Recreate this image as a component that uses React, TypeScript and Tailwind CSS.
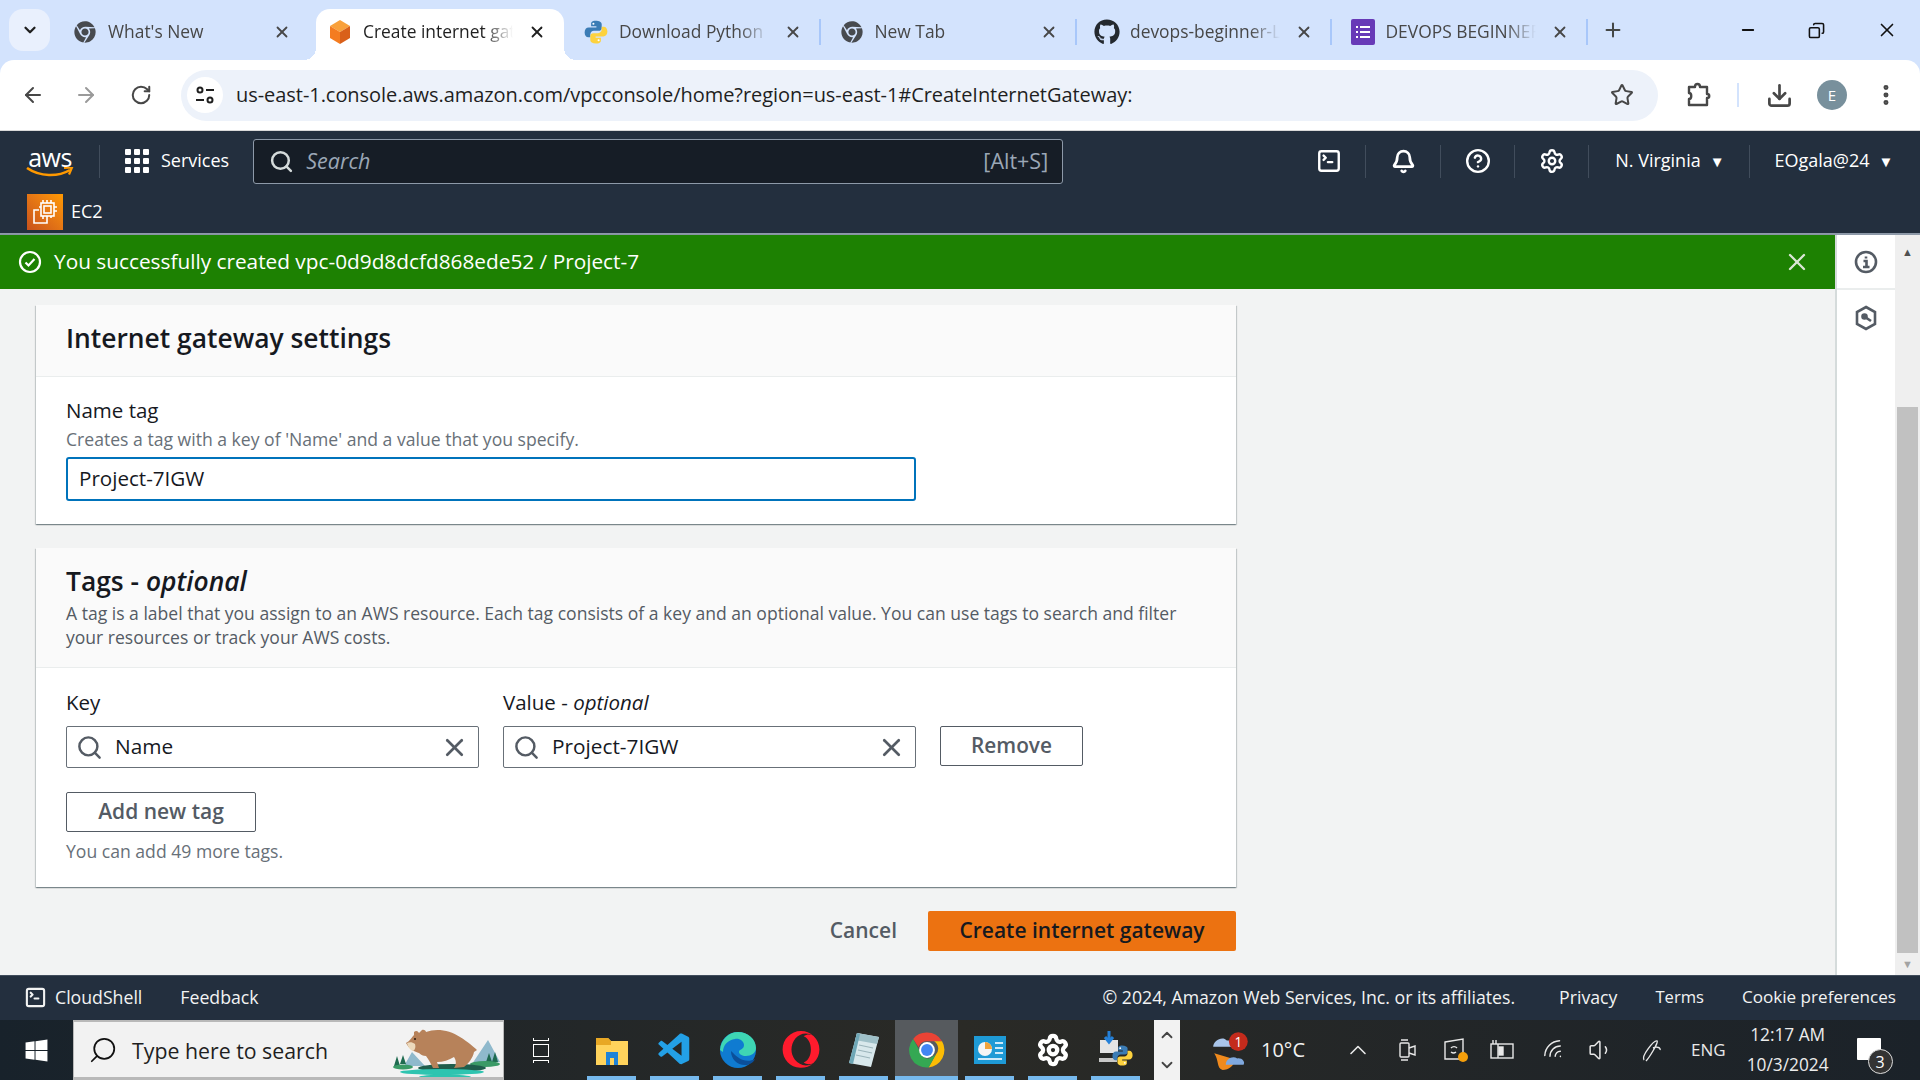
import { ReactNode } from "react";
import {
  ArrowLeft,
  ArrowRight,
  Bell,
  ChevronDown,
  ChevronUp,
  CircleHelp,
  Copy,
  Download,
  EllipsisVertical,
  Minus,
  Plus,
  RotateCw,
  Search,
  Settings,
  Star,
  SquareTerminal,
  Volume1,
  Wifi,
  X,
} from "lucide-react";
import { FaChrome, FaGithub, FaWindows, FaOpera } from "react-icons/fa";
import { VscVscode } from "react-icons/vsc";

function ChromeGlyph({ size = 24 }: { size?: number }) {
  return (
    <svg width={size} height={size} viewBox="0 0 48 48">
      <path d="M24 2a22 22 0 0 1 19 11H24a11 11 0 0 0-10.500 7.500L6.500 10A22 22 0 0 1 24 2z" fill="#ea4335" />
      <path d="M43 13a22 22 0 0 1-17 33l9-16a11 11 0 0 0-2-17z" fill="#fbbc04" />
      <path d="M26 46A22 22 0 0 1 6.500 10L15 26a11 11 0 0 0 11 9l9-5z" fill="#34a853" />
      <circle cx="24" cy="24" r="10" fill="#fff" />
      <circle cx="24" cy="24" r="7.500" fill="#4285f4" />
    </svg>
  );
}

function AwsCube() {
  return (
    <svg width="22" height="26" viewBox="0 0 22 26">
      <path d="M11 1l10 6-10 6L1 7z" fill="#f9a13b" />
      <path d="M1 7l10 6v12L1 19z" fill="#f47c20" />
      <path d="M21 7l-10 6v12l10-6z" fill="#d9601a" />
    </svg>
  );
}

function PythonGlyph({ size = 26 }: { size?: number }) {
  return (
    <svg width={size} height={size} viewBox="0 0 32 32">
      <path d="M16 2c-6 0-6 2.500-6 4v3h6.500v1.500H7c-3 0-5 2.500-5 6s2 6 4.500 6H9v-3.500c0-2.500 2-4.500 4.500-4.500h6c2 0 3.500-1.500 3.500-3.500V6c0-2-2.500-4-8-4z" fill="#3b7cb5" />
      <path d="M16 30c6 0 6-2.500 6-4v-3h-6.500v-1.500H25c3 0 5-2.500 5-6s-2-6-4.500-6H23v3.500c0 2.500-2 4.500-4.500 4.500h-6C10.500 17.500 9 19 9 21v5c0 2 2.500 4 7 4z" fill="#fdd23e" />
      <circle cx="12.800" cy="5.800" r="1.300" fill="#fff" />
      <circle cx="19.200" cy="26.200" r="1.300" fill="#fff" />
    </svg>
  );
}

function FormsGlyph() {
  return (
    <svg width="24" height="26" viewBox="0 0 24 26">
      <rect width="24" height="26" rx="2" fill="#673ab7" />
      <path d="M9 7h10v2H9zM9 12h10v2H9zM9 17h10v2H9zM5 7h2v2H5zM5 12h2v2H5zM5 17h2v2H5z" fill="#fff" />
    </svg>
  );
}

function Tab({
  icon,
  label,
  active = false,
  divider = false,
}: {
  icon: ReactNode;
  label: string;
  active?: boolean;
  divider?: boolean;
}) {
  return (
    <div
      className={`relative flex h-[51px] shrink-0 items-center pb-[6px] ${
        active
          ? "-ml-[2.500px] mr-[10px] w-[248px] rounded-t-[14px] bg-white pl-[11px]"
          : "w-[255.500px] pl-[9px]"
      }`}
    >
      {active ? (
        <>
          <span className="absolute bottom-0 left-[-12px] h-[12px] w-[12px] bg-[radial-gradient(circle_at_0_0,transparent_12px,white_12px)]" />
          <span className="absolute bottom-0 right-[-12px] h-[12px] w-[12px] bg-[radial-gradient(circle_at_100%_0,transparent_12px,white_12px)]" />
        </>
      ) : null}
      <span className="flex w-[26px] shrink-0 justify-center">{icon}</span>
      <span
        className={`ml-[10px] w-[150px] overflow-hidden whitespace-nowrap text-[17.400px] [mask-image:linear-gradient(to_right,black_80%,transparent)] ${
          active ? "text-[#1f1f1f]" : "text-[#474747]"
        }`}
      >
        {label}
      </span>
      <X
        size={18}
        strokeWidth={2.4}
        className={`ml-[15px] shrink-0 ${active ? "text-[#1f1f1f]" : "text-[#474747]"}`}
      />
      {divider ? <span className="ml-[17px] h-[26px] w-[2px] shrink-0 bg-[#a8c7fa]" /> : null}
    </div>
  );
}

function TopBar() {
  return (
    <div className="flex h-[60px] shrink-0 items-end bg-[#d3e3fd] pl-[9px] pr-[22px]">
      <div className="mb-[9px] flex h-[42px] w-[41px] shrink-0 items-center justify-center rounded-[14px] bg-[#e9f0fd]">
        <ChevronDown size={18} strokeWidth={3} className="text-[#1f1f1f]" />
      </div>
      <div className="ml-[13px] flex">
        <Tab icon={<FaChrome size={22} className="text-[#474a4f]" />} label="What's New" />
        <Tab icon={<AwsCube />} label="Create internet gateway" active />
        <Tab icon={<PythonGlyph />} label="Download Python" divider />
        <Tab icon={<FaChrome size={22} className="text-[#474a4f]" />} label="New Tab" divider />
        <Tab icon={<FaGithub size={26} className="text-[#24292f]" />} label="devops-beginner-L" divider />
        <Tab icon={<FormsGlyph />} label="DEVOPS BEGINNERS" divider />
      </div>
      <Plus size={22} strokeWidth={2.2} className="mb-[19px] ml-[6px] shrink-0 text-[#444746]" />
      <div className="mb-[19px] ml-auto flex w-[159px] items-center justify-between text-[#111]">
        <Minus size={18} strokeWidth={2.4} />
        <Copy size={17} strokeWidth={2.2} className="-scale-x-100" />
        <X size={22} strokeWidth={1.8} />
      </div>
    </div>
  );
}

function AddressBar() {
  return (
    <div className="h-[71px] shrink-0 bg-[#d3e3fd]">
      <div className="flex h-[71px] items-center rounded-t-[14px] border-b-[1px] border-[#d9d9d9] bg-white pl-[21px]">
        <ArrowLeft size={24} strokeWidth={2} className="text-[#474747]" />
        <ArrowRight size={24} strokeWidth={2} className="ml-[29px] text-[#9a9a9a]" />
        <RotateCw size={22} strokeWidth={2.2} className="ml-[32px] text-[#474747]" />
        <div className="ml-[29px] flex h-[51px] w-[1477px] shrink-0 items-center rounded-full bg-[#edf2fa] pl-[6px] pr-[24px]">
          <span className="flex h-[36px] w-[36px] items-center justify-center rounded-full bg-white">
            <svg width="22" height="22" viewBox="0 0 22 22" fill="none" stroke="#1f1f1f" strokeWidth="2">
              <circle cx="6" cy="6" r="2.500" />
              <path d="M12 6h8M2 16h8" />
              <circle cx="16" cy="16" r="2.500" />
            </svg>
          </span>
          <span className="ml-[13px] whitespace-nowrap text-[20px] tracking-[-0.05px] text-[#1f1f1f]">
            us-east-1.console.aws.amazon.com/vpcconsole/home?region=us-east-1#CreateInternetGateway:
          </span>
          <Star size={24} strokeWidth={2} className="ml-auto text-[#474747]" />
        </div>
        <svg width="26" height="26" viewBox="0 0 26 26" fill="none" stroke="#474747" strokeWidth="2.400" strokeLinejoin="round" className="ml-[28px]">
          <path d="M3 5h6c0-4 5-4 5 0h7v7c3 0 3 4 0 4v7H3v-6c3 0 3-6 0-6z" />
        </svg>
        <span className="ml-[25px] h-[24px] w-[2px] bg-[#d3e3fd]" />
        <Download size={27} strokeWidth={2.4} className="ml-[27px] text-[#474747]" />
        <span className="ml-[24px] flex h-[30px] w-[30px] items-center justify-center rounded-full bg-[#78909c] text-[15px] text-white">
          E
        </span>
        <EllipsisVertical size={26} strokeWidth={2.6} className="ml-[26px] text-[#474747]" />
      </div>
    </div>
  );
}

function Divider({ className = "" }: { className?: string }) {
  return <span className={`h-[33px] w-[1px] shrink-0 bg-[#414d5c] ${className}`} />;
}

function ConsoleHeader() {
  return (
    <div className="h-[104px] shrink-0 border-b-[2px] border-[#8d99a8] bg-[#232f3e] text-white">
      <div className="flex h-[60px] items-center">
        <div className="ml-[27px] flex w-[46px] flex-col items-center">
          <span className="text-[25px] leading-[22px] tracking-[-0.5px]">aws</span>
          <svg width="48" height="10" viewBox="0 0 48 10" className="-mt-[1px]">
            <path d="M1 1c13 9 31 9 43 2" fill="none" stroke="#ff9900" strokeWidth="2.600" />
            <path d="M38 1l8-.500-3 7" fill="none" stroke="#ff9900" strokeWidth="2.200" />
          </svg>
        </div>
        <Divider className="ml-[26px]" />
        <div className="ml-[25px] grid h-[24px] w-[24px] grid-cols-3 gap-[3px]">
          {Array.from({ length: 9 }).map((_, i) => (
            <span key={i} className="rounded-[1px] bg-white" />
          ))}
        </div>
        <span className="mb-[2px] ml-[12px] text-[18px]">Services</span>
        <div className="ml-[24px] flex h-[45px] w-[810px] shrink-0 items-center rounded-[3px] border border-[#8d99a8] bg-[#161d26] pl-[15px] pr-[14px]">
          <Search size={25} strokeWidth={2.4} className="text-[#d5dbdb]" />
          <span className="ml-[12px] text-[21.500px] italic text-[#9ba7b6]">Search</span>
          <span className="ml-auto text-[21.500px] text-[#9ba7b6]">[Alt+S]</span>
        </div>
        <SquareTerminal size={26} strokeWidth={2.2} className="ml-[253px]" />
        <Divider className="ml-[23px]" />
        <Bell size={25} strokeWidth={2.6} className="ml-[25px]" />
        <Divider className="ml-[24px]" />
        <CircleHelp size={26} strokeWidth={2.2} className="ml-[24px]" />
        <Divider className="ml-[23px]" />
        <Settings size={26} strokeWidth={2.2} className="ml-[24px]" />
        <Divider className="ml-[23px]" />
        <span className="mb-[2px] ml-[26px] text-[18px]">N. Virginia</span>
        <span className="ml-[9px] text-[15px]">▼</span>
        <Divider className="ml-[24px]" />
        <span className="mb-[2px] ml-[25px] text-[18px]">EOgala@24</span>
        <span className="ml-[9px] text-[15px]">▼</span>
      </div>
      <div className="flex h-[42px] items-center pl-[27px]">
        <span className="flex h-[36px] w-[36px] items-center justify-center bg-gradient-to-tr from-[#c8511b] to-[#ff9900]">
          <svg width="28" height="28" viewBox="0 0 28 28" fill="none" stroke="#fff" strokeWidth="1.600">
            <rect x="10" y="5" width="13" height="13" />
            <rect x="13" y="8" width="7" height="7" />
            <path d="M8 12H3v13h13v-5M12 2v3M16 2v3M20 2v3M12 18v3M16 18v3M20 18v2M23 9h3M23 13h3M8 9h2" />
          </svg>
        </span>
        <span className="mb-[2px] ml-[8px] text-[18px]">EC2</span>
      </div>
    </div>
  );
}

function Card({ title, children }: { title: ReactNode; children: ReactNode }) {
  return (
    <section className="w-[1200px] bg-white shadow-[0_1px_1px_0_rgba(0,28,36,0.3),1px_1px_1px_0_rgba(0,28,36,0.15),-1px_1px_1px_0_rgba(0,28,36,0.15)]">
      {title}
      {children}
    </section>
  );
}

function TagInput({ value }: { value: string }) {
  return (
    <div className="flex h-[42px] w-[413px] items-center rounded-[2px] border border-[#687078] bg-white pl-[9px] pr-[9px]">
      <Search size={27} strokeWidth={2.2} className="text-[#545b64]" />
      <span className="ml-[12px] text-[20.800px] text-[#16191f]">{value}</span>
      <X size={29} strokeWidth={2.2} className="ml-auto text-[#545b64]" />
    </div>
  );
}

function MainArea() {
  return (
    <div className="flex min-h-0 flex-1">
      <div className="flex w-[1835px] shrink-0 flex-col">
        <div className="flex h-[54px] shrink-0 items-center bg-[#1d8102] pl-[18px] pr-[24px] text-white shadow-[0_1px_2px_rgba(0,0,0,0.4)]">
          <svg width="24" height="24" viewBox="0 0 24 24" fill="none" stroke="#fff" strokeWidth="2.200">
            <circle cx="12" cy="12" r="10" />
            <path d="M7.500 12.500l3 3 6-6.500" />
          </svg>
          <span className="ml-[12px] text-[20.800px]">You successfully created vpc-0d9d8dcfd868ede52 / Project-7</span>
          <X size={28} strokeWidth={2} className="ml-auto text-[#dbe6d6]" />
        </div>
        <div className="flex min-h-0 flex-1 flex-col gap-[24px] overflow-hidden bg-[#f2f3f3] pl-[36px] pt-[16px]">
          <Card
            title={
              <div className="flex h-[72px] items-center border-b border-[#eaeded] bg-[#fafafa] px-[30px] pb-[4px]">
                <h2 className="text-[26.400px] font-semibold text-[#16191f]">Internet gateway settings</h2>
              </div>
            }
          >
            <div className="h-[147px] px-[30px] pt-[19px]">
              <p className="text-[20.500px] leading-[28px] text-[#16191f]">Name tag</p>
              <p className="mt-[2px] text-[17.600px] leading-[26px] text-[#687078]">
                Creates a tag with a key of 'Name' and a value that you specify.
              </p>
              <div className="mt-[5px] flex h-[44px] w-[850px] items-center rounded-[3px] border-[2px] border-[#0073bb] pb-[1px] pl-[11px] text-[20.600px] text-[#16191f]">
                Project-7IGW
              </div>
            </div>
          </Card>
          <Card
            title={
              <div className="h-[120px] border-b border-[#eaeded] bg-[#fafafa] px-[30px] pt-[15px]">
                <h2 className="text-[26.400px] font-semibold leading-[36px] text-[#16191f]">
                  Tags - <em className="font-semibold">optional</em>
                </h2>
                <p className="mt-[3px] text-[17.560px] leading-[23.500px] text-[#545b64]">
                  A tag is a label that you assign to an AWS resource. Each tag consists of a key and an optional value. You can use tags to search and filter
                  <br />
                  your resources or track your AWS costs.
                </p>
              </div>
            }
          >
            <div className="h-[219px] px-[30px] pt-[20px]">
              <div className="flex gap-[24px]">
                <div>
                  <p className="mb-[10px] text-[20.500px] leading-[28px] text-[#16191f]">Key</p>
                  <TagInput value="Name" />
                </div>
                <div>
                  <p className="mb-[10px] text-[20.500px] leading-[28px] text-[#16191f]">
                    Value - <em>optional</em>
                  </p>
                  <TagInput value="Project-7IGW" />
                </div>
                <div className="mb-[2px] flex h-[40px] w-[143px] items-center justify-center self-end rounded-[2px] border border-[#545b64] bg-white text-[20.800px] font-semibold text-[#545b64]">
                  Remove
                </div>
              </div>
              <div className="mt-[24px] flex h-[40px] w-[190px] items-center justify-center rounded-[2px] border border-[#545b64] text-[21px] font-semibold text-[#545b64]">
                Add new tag
              </div>
              <p className="mt-[6px] text-[17.600px] leading-[26px] text-[#687078]">You can add 49 more tags.</p>
            </div>
          </Card>
          <div className="flex w-[1200px] items-center justify-end">
            <span className="text-[21px] font-semibold text-[#545b64]">Cancel</span>
            <span className="ml-[31px] flex h-[40px] w-[308px] items-center justify-center rounded-[2px] bg-[#ec7211] text-[21px] font-semibold text-[#16191f]">
              Create internet gateway
            </span>
          </div>
        </div>
      </div>
      <aside className="flex w-[60px] shrink-0 flex-col border-l-[2px] border-[#d5dbdb] bg-white">
        <div className="flex h-[55px] items-center justify-center border-b-[2px] border-[#eaeded]">
          <svg width="24" height="24" viewBox="0 0 24 24" fill="none" stroke="#545b64" strokeWidth="2.600">
            <circle cx="12" cy="12" r="10" />
            <path d="M9.500 11h3v6M9 17h6.500M12 6.500v2" />
          </svg>
        </div>
        <div className="flex h-[55px] items-center justify-center">
          <svg width="24" height="26" viewBox="0 0 24 26" fill="none" stroke="#545b64" strokeWidth="2.600">
            <path d="M12 2l9 5v12l-9 5-9-5V7z" />
            <circle cx="10.500" cy="11.500" r="2" fill="#545b64" />
            <path d="M11 12l6 4" />
          </svg>
        </div>
      </aside>
      <div className="flex w-[25px] shrink-0 flex-col items-center bg-[#efefef]">
        <span className="mt-[11px] text-[11px] leading-[12px] text-[#505050]">▲</span>
        <div className="mt-[149px] h-[546px] w-[21px] bg-[#c1c1c1]" />
        <span className="mt-[5px] text-[11px] leading-[12px] text-[#a3a3a3]">▼</span>
      </div>
    </div>
  );
}

function ConsoleFooter() {
  return (
    <div className="flex h-[45px] shrink-0 items-center border-t border-[#414d5c] bg-[#232f3e] pb-[2px] pl-[24px] pr-[24px] text-[17.700px] text-[#f2f3f3]">
      <SquareTerminal size={23} strokeWidth={2.2} />
      <span className="ml-[8px]">CloudShell</span>
      <span className="ml-[38px]">Feedback</span>
      <span className="ml-auto">© 2024, Amazon Web Services, Inc. or its affiliates.</span>
      <span className="ml-[44px]">Privacy</span>
      <span className="ml-[38px] text-[16.600px]">Terms</span>
      <span className="ml-[38px] text-[17.100px]">Cookie preferences</span>
    </div>
  );
}

function BearArt() {
  return (
    <svg width="123" height="60" viewBox="0 0 123 60">
      <path d="M24 46l8-14 13 14zM92 44l16-24 12 22z" fill="#8fb9cc" />
      <path d="M14 46l3-10 3 10zM20 44l3-9 3 9zM106 42l3-9 3 9zM112 42l3-10 3 10z" fill="#1f6b50" />
      <ellipse cx="23" cy="47" rx="10" ry="2.500" fill="#3a9a66" />
      <ellipse cx="105" cy="44" rx="15" ry="3" fill="#3a9a66" />
      <ellipse cx="72" cy="48" rx="34" ry="4" fill="#1f5d4c" />
      <ellipse cx="62" cy="52" rx="42" ry="3" fill="#2ec4b0" />
      <ellipse cx="65" cy="57" rx="26" ry="2.500" fill="#2ec4b0" />
      <path d="M26 23c4-2 6-6 8-8l0-3c2-2 4-1 5 1l3-3c2-1 4 1 4 2 10-4 24-2 34 5 8 5 14 10 17 13l-3 2c-1 6-6 12-10 15l-10 1c3-4 2-8 0-11-5 3-11 5-17 5l2 6H53c-2-4-4-8-7-12-3 0-5-1-7-3-4-1-10-4-13-10z" fill="#b7825a" />
      <path d="M27 23c3-1 5-1 8 1 1 3 0 6-2 7-3-1-5-4-6-8z" fill="#ecd9bb" />
      <circle cx="35" cy="19" r="1" fill="#2a1a10" />
    </svg>
  );
}

function Tray({ children, className = "" }: { children: ReactNode; className?: string }) {
  return <span className={`flex items-center text-[#e8e8e8] ${className}`}>{children}</span>;
}

function AppSlot({ children, active = false }: { children: ReactNode; active?: boolean }) {
  return (
    <div className={`flex h-[60px] w-[63px] shrink-0 flex-col ${active ? "bg-[#565a5e]" : ""}`}>
      <div className="flex flex-1 items-center justify-center pt-[3px]">{children}</div>
      <div className={`h-[4px] bg-[#76b9ed] ${active ? "" : "mx-[7px]"}`} />
    </div>
  );
}

function Taskbar() {
  return (
    <div className="flex h-[60px] shrink-0 items-center bg-gradient-to-r from-[#18222b] via-[#2a2a26] to-[#1b2229] text-white">
      <div className="flex w-[73px] shrink-0 justify-center">
        <FaWindows size={25} />
      </div>
      <div className="flex h-[60px] w-[431px] shrink-0 items-center overflow-hidden border-x border-b-[3px] border-t-[2px] border-[#b9b9b9] bg-[#f2f2f2] pl-[14px] text-[#1f1f1f]">
        <Search size={30} strokeWidth={1.4} className="-scale-x-100 text-[#111]" />
        <span className="ml-[14px] mt-[3px] text-[21.300px]">Type here to search</span>
        <span className="ml-auto">
          <BearArt />
        </span>
      </div>
      <div className="ml-[29px] flex w-[24px] shrink-0 flex-col gap-[3px]">
        <span className="h-[3px] w-[16px] border-x border-b border-white" />
        <span className="h-[13px] w-[16px] border border-white" />
        <span className="h-[3px] w-[16px] border-x border-t border-white" />
      </div>
      <div className="ml-[23px] flex">
        <AppSlot>
          <svg width="34" height="32" viewBox="0 0 34 32">
            <path d="M1 4h12l3 3h17v24H1z" fill="#ffd35c" />
            <path d="M1 4h12l3 3v4H1z" fill="#e8a825" />
            <path d="M11 18h12v13H11z" fill="#1f83d8" />
            <path d="M15 24h4v7h-4z" fill="#ffd35c" />
          </svg>
        </AppSlot>
        <AppSlot>
          <VscVscode size={38} className="text-[#23a0e6]" />
        </AppSlot>
        <AppSlot>
          <svg width="38" height="38" viewBox="0 0 38 38">
            <circle cx="19" cy="19" r="18" fill="#0f7bd1" />
            <path d="M1 19C2 8 10 1 19 1c10 0 18 7 18 16 0 5-5 8-10 8-4 0-7-2-7-4 0-3 5-2 5-7 0-4-5-7-9-6C9 9 4 14 4 21z" fill="#3ed6b4" />
            <path d="M12 20c0 8 6 14 14 14 4 0 8-2 10-6-5 3-12 2-16-1-3-2-5-4-8-7z" fill="#0b4f9a" />
          </svg>
        </AppSlot>
        <AppSlot>
          <FaOpera size={38} className="text-[#ff1b2d]" />
        </AppSlot>
        <AppSlot>
          <svg width="34" height="38" viewBox="0 0 34 38">
            <path d="M10 2l22 4-8 30L2 32z" fill="#d8e8ec" />
            <path d="M10 2l22 4-2 7-22-4z" fill="#9fc0c8" />
            <path d="M2 32l8-30 3 1-7 30z" fill="#6fa7b6" />
            <path d="M12 14l14 3M11 19l14 3M9 24l14 3" stroke="#9cb5bb" strokeWidth="1.200" />
          </svg>
        </AppSlot>
        <AppSlot active>
          <ChromeGlyph size={38} />
        </AppSlot>
        <AppSlot>
          <svg width="32" height="32" viewBox="0 0 32 32">
            <rect width="32" height="28" y="2" fill="#1e9ad6" />
            <circle cx="11" cy="15" r="7" fill="#f5f5f5" />
            <path d="M11 15V8a7 7 0 0 1 7 7z" fill="#f2a33a" />
            <path d="M21 9h8M21 14h8M21 19h8M4 25h24" stroke="#cdeafa" strokeWidth="2" />
          </svg>
        </AppSlot>
        <AppSlot>
          <Settings size={34} strokeWidth={3} className="text-white" />
        </AppSlot>
        <AppSlot>
          <svg width="38" height="40" viewBox="0 0 38 40">
            <rect x="3" y="10" width="18" height="13" fill="#e4e4e4" />
            <path d="M12 1v10M8 7l4 5 4-5" fill="none" stroke="#2480d8" strokeWidth="3" />
            <path d="M2 28h18v4H2z" fill="#c8c8c8" />
            <g transform="translate(14 14) scale(.72)">
              <PythonGlyph size={32} />
            </g>
          </svg>
        </AppSlot>
      </div>
      <div className="ml-[7px] flex h-[60px] w-[26px] shrink-0 flex-col items-center justify-between bg-[#f2f2f2] py-[6px] text-[#444]">
        <ChevronUp size={18} strokeWidth={2.4} />
        <ChevronDown size={18} strokeWidth={2.4} />
      </div>
      <div className="ml-[30px] flex w-[43px] shrink-0 items-center">
        <svg width="42" height="44" viewBox="0 0 40 42">
          <path d="M4 24c5 8 2 14 8 16 6 0 11-4 12-10z" fill="#f08a1d" />
          <path d="M3 18c0-6 9-11 13-6 5-1 7 3 6 6z" fill="#a9c5ea" />
          <path d="M15 35c0-5 6-9 11-6 4-1 8 3 6 6z" fill="#7fa8de" />
          <circle cx="27" cy="13" r="9" fill="#c42b1c" />
          <text x="27" y="18" textAnchor="middle" fontSize="13" fill="#fff">1</text>
        </svg>
      </div>
      <span className="ml-[8px] text-[20px] text-[#f2f2f2]">10°C</span>
      <Tray className="ml-[39px]"><ChevronUp size={28} strokeWidth={1.4} /></Tray>
      <Tray className="ml-[27px]">
        <svg width="18" height="24" viewBox="0 0 18 24" fill="none" stroke="currentColor" strokeWidth="1.400">
          <rect x="1" y="5" width="9" height="14" rx="1" />
          <path d="M10 10l6-2v9l-6-2M2 2h7M2 22h7" />
        </svg>
      </Tray>
      <Tray className="ml-[27px]">
        <svg width="26" height="26" viewBox="0 0 26 26" fill="none" stroke="currentColor" strokeWidth="1.400">
          <path d="M1 5l18-3v20H1z" />
          <path d="M7 11a4 4 0 0 1 6 0M12 15a4 4 0 0 1-5 0" />
          <circle cx="19" cy="20" r="5" fill="#f59f0b" stroke="none" />
        </svg>
      </Tray>
      <Tray className="ml-[20px]">
        <svg width="24" height="26" viewBox="0 0 24 26" fill="none" stroke="currentColor" strokeWidth="1.400">
          <rect x="1" y="7" width="22" height="14" />
          <path d="M8 7v14M3 3v4M6 3v4" />
          <rect x="9" y="10" width="4" height="8" fill="currentColor" />
        </svg>
      </Tray>
      <Tray className="ml-[28px]"><Wifi size={25} strokeWidth={1.4} className="rotate-[-45deg]" /></Tray>
      <Tray className="ml-[21px]"><Volume1 size={26} strokeWidth={1.4} /></Tray>
      <Tray className="ml-[26px]">
        <svg width="24" height="28" viewBox="0 0 24 28" fill="none" stroke="currentColor" strokeWidth="1.400">
          <path d="M4 24c-3-4 10-20 13-19 2 1-8 17-11 20M13 12c4-2 8 0 7 2" />
        </svg>
      </Tray>
      <span className="ml-[27px] text-[17px] text-[#e8e8e8]">ENG</span>
      <div className="ml-[17px] flex w-[90px] shrink-0 flex-col items-center text-[17.300px] leading-[30px] text-[#ececec]">
        <span>12:17 AM</span>
        <span>10/3/2024</span>
      </div>
      <div className="ml-[24px] flex h-[44px] w-[38px] shrink-0 items-start pt-[10px]">
        <span className="relative h-[22px] w-[24px] rounded-[1px] bg-white">
          <span className="absolute left-[11px] top-[11px] flex h-[25px] w-[25px] items-center justify-center rounded-full border border-[#ddd] bg-[#333] text-[16px] text-white">
            3
          </span>
        </span>
      </div>
    </div>
  );
}

export default function App() {
  return (
    <div className="flex h-[1080px] w-[1920px] flex-col overflow-hidden bg-white font-['Open_Sans','Noto_Sans',sans-serif]">
      <TopBar />
      <AddressBar />
      <ConsoleHeader />
      <MainArea />
      <ConsoleFooter />
      <Taskbar />
    </div>
  );
}
